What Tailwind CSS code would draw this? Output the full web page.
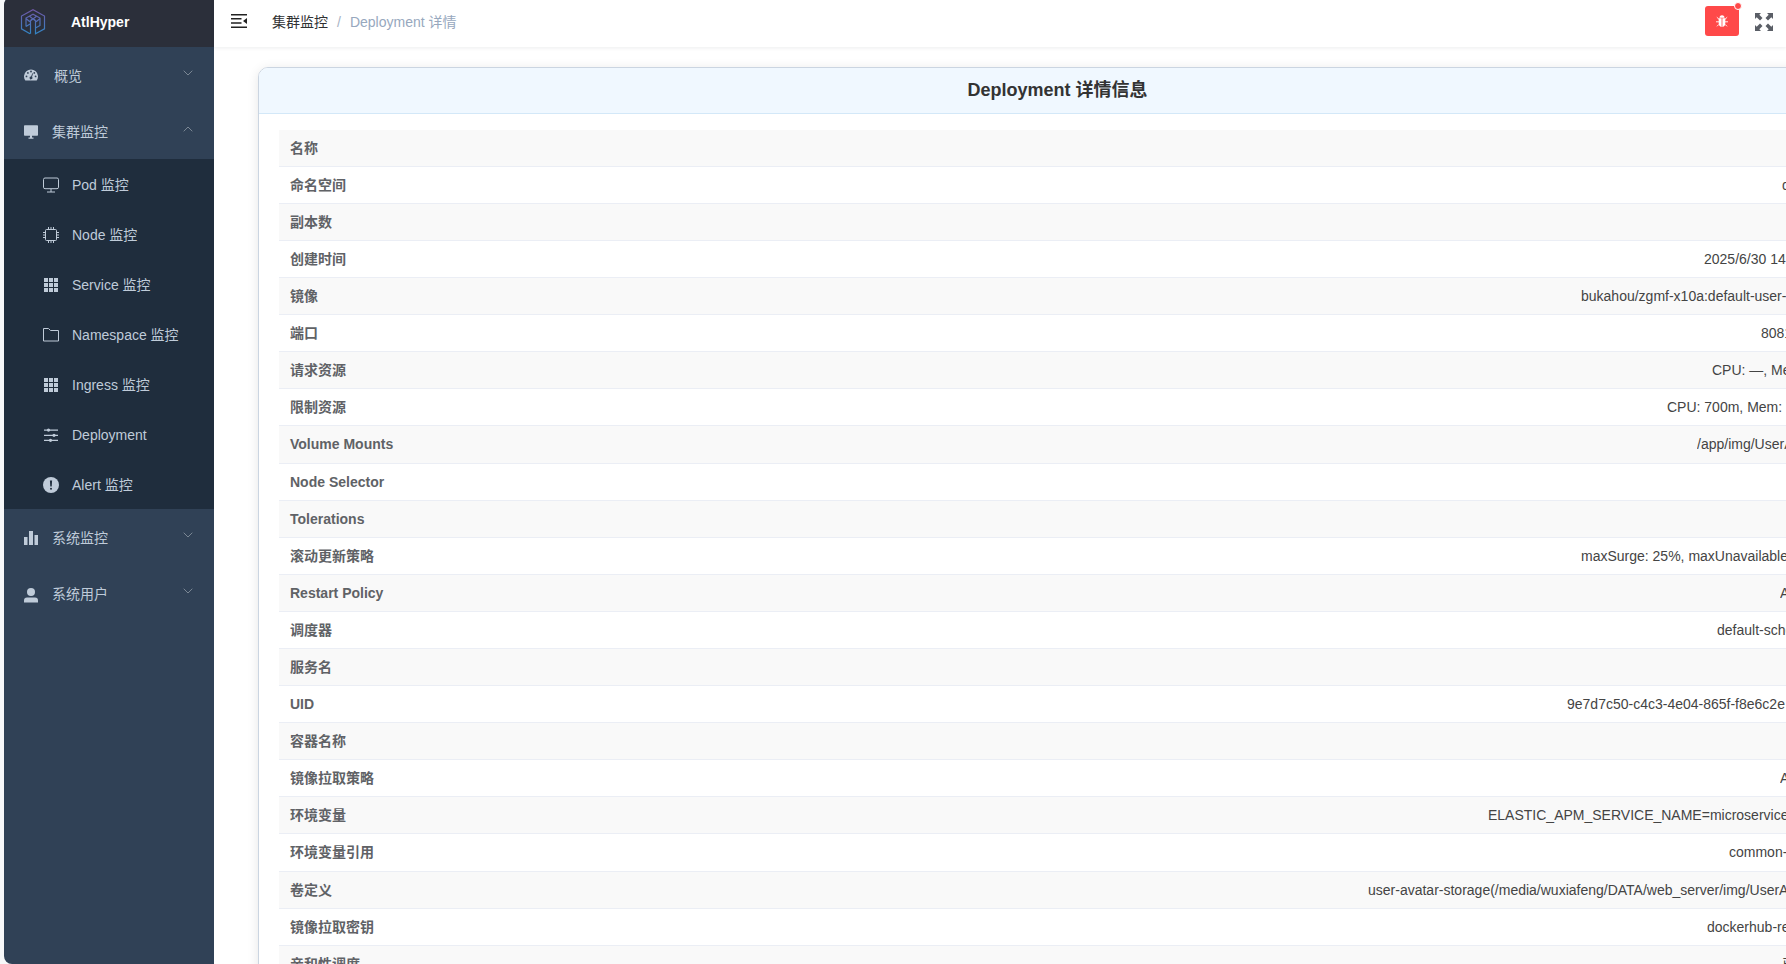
<!DOCTYPE html>
<html lang="zh-CN">
<head>
<meta charset="utf-8">
<title>AtlHyper</title>
<script src="https://cdn.jsdelivr.net/npm/@tailwindcss/browser@4"></script>
</head>
<body class="h-[964px] w-[1786px] overflow-hidden bg-white font-['Liberation_Sans','Noto_Sans_CJK_SC',sans-serif] text-sm text-[#303133]">
<div class="flex h-full bg-[#f7f8f9] pl-1">
  <aside class="-mt-[3px] flex w-[210px] shrink-0 flex-col overflow-hidden rounded-l-lg bg-[#304156] text-[#bfcbd9]">
    <div class="flex h-[50px] shrink-0 items-center bg-[#2b2f3a] pl-4">
      <svg class="size-[26px]" viewBox="0 0 26 26" fill="none" stroke="url(#g)" stroke-width="1.2">
        <defs><linearGradient id="g" x1="0" y1="0" x2="0" y2="26" gradientUnits="userSpaceOnUse"><stop stop-color="#7257a8"/><stop offset="1" stop-color="#2f86c4"/></linearGradient></defs>
        <path d="M10 24.800 1.500 19.800V7L13 .8 24.500 7v12.800L15.500 24.800V12Q15 10 13 10T10.500 12V24.800M6 17.500V9L13 5.200 20 9v7.500l-4.500 2.500M6 17.500l4-2.500M6 9.500l3.500 3 3.500-2.500 3.500 2.500 3.500-3M9.500 7.300 13 10l3.500-2.700"/>
      </svg>
      <h1 class="ml-[25px] text-sm font-bold text-white">AtlHyper</h1>
    </div>
    <nav>
      <div class="flex h-14 items-center pr-[21px] pl-5">
        <svg class="h-3.5 w-3.5" viewBox="0 0 14 14" fill="currentColor"><path fill-rule="evenodd" d="M1.300 12.500A7 7 0 1 1 12.700 12.500ZM2.500 7.500a.9.900 0 1 0 0 1.800.9.900 0 0 0 0-1.800ZM3.900 4a.9.900 0 1 0 0 1.800.9.900 0 0 0 0-1.800ZM7 2.600a.9.900 0 1 0 0 1.800.9.900 0 0 0 0-1.800ZM10.300 4a.9.900 0 1 0 0 1.800.9.900 0 0 0 0-1.800ZM11.600 7.500a.9.900 0 1 0 0 1.800.9.900 0 0 0 0-1.800ZM8.300 5.300 7.100 8.500a1.400 1.400 0 1 0 .9.400L9 5.500Z"/></svg>
        <span class="ml-4 grow pt-0.5">概览</span>
        <svg class="mb-1 h-[6px] w-[10px]" viewBox="0 0 10 6" fill="none" stroke="#7b8794"><path d="m.7.7 4.300 4.300L9.300.7"/></svg>
      </div>
      <div class="flex h-14 items-center pr-[21px] pl-5">
        <svg class="mt-px h-3.5 w-3.5" viewBox="0 0 14 14" fill="currentColor"><path d="M.8.300h12.400q.8 0 .8.800v8.800q0 .8-.8.800H8v1.700h1.500v1.300h-5v-1.300H6v-1.700H.8q-.8 0-.8-.8V1.100Q0 .300.800.300Z"/></svg>
        <span class="ml-3.5 grow pt-0.5">集群监控</span>
        <svg class="mb-1 h-[6px] w-[10px]" viewBox="0 0 10 6" fill="none" stroke="#7b8794"><path d="m.7 5.300 4.300-4.300 4.300 4.300"/></svg>
      </div>
      <ul class="bg-[#1f2d3d]">
        <li class="flex h-[50px] items-center gap-[13px] pt-[2px] pl-[39px]"><svg class="size-4" viewBox="0 0 16 16" fill="none" stroke="currentColor"><rect x=".5" y="1" width="15" height="10.700" rx="1.500"/><path d="M8 12v3M4 15h8"/></svg>Pod 监控</li>
        <li class="flex h-[50px] items-center gap-[13px] pt-[2px] pl-[39px]"><svg class="size-4" viewBox="0 0 16 16" fill="none" stroke="currentColor"><rect x="2.500" y="2.500" width="11" height="11" rx="1"/><path d="M5.500 0v2.500M8 0v2.500M10.500 0v2.500M5.500 13.500V16M8 13.500V16M10.500 13.500V16M0 5.500h2.500M0 8h2.500M0 10.500h2.500M13.500 5.500H16M13.500 8H16M13.500 10.500H16"/></svg>Node 监控</li>
        <li class="flex h-[50px] items-center gap-[13px] pt-[2px] pl-[39px]"><svg class="size-4" viewBox="0 0 16 16" fill="currentColor"><path d="M1 1h4v4H1zM6 1h4v4H6zM11 1h4v4h-4zM1 6h4v4H1zM6 6h4v4H6zM11 6h4v4h-4zM1 11h4v4H1zM6 11h4v4H6zM11 11h4v4h-4z"/></svg>Service 监控</li>
        <li class="flex h-[50px] items-center gap-[13px] pt-[2px] pl-[39px]"><svg class="size-4" viewBox="0 0 16 16" fill="none" stroke="currentColor"><path d="M.5 1.500h5l2 2h8v10.500H.5Z"/></svg>Namespace 监控</li>
        <li class="flex h-[50px] items-center gap-[13px] pt-[2px] pl-[39px]"><svg class="size-4" viewBox="0 0 16 16" fill="currentColor"><path d="M1 1h4v4H1zM6 1h4v4H6zM11 1h4v4h-4zM1 6h4v4H1zM6 6h4v4H6zM11 6h4v4h-4zM1 11h4v4H1zM6 11h4v4H6zM11 11h4v4h-4z"/></svg>Ingress 监控</li>
        <li class="flex h-[50px] items-center gap-[13px] pt-[2px] pl-[39px]"><svg class="size-4" viewBox="0 0 16 16" fill="currentColor"><path d="M1 2.500h14v1.200H1zM1 7.700h14v1.200H1zM1 12.700h14v1.200H1z"/><circle cx="5.500" cy="3.100" r="1.600"/><circle cx="11" cy="8.300" r="1.600"/><circle cx="7.500" cy="13.300" r="1.600"/></svg>Deployment</li>
        <li class="flex h-[50px] items-center gap-[13px] pt-[2px] pl-[39px]"><svg class="size-4" viewBox="0 0 16 16"><circle cx="8" cy="8" r="8" fill="currentColor"/><path d="M6.900 3.500h2.200L8.700 9.500H7.300Z" fill="#1f2d3d"/><circle cx="8" cy="11.700" r="1" fill="#1f2d3d"/></svg>Alert 监控</li>
      </ul>
      <div class="flex h-14 items-center pr-[21px] pl-5">
        <svg class="mt-px h-3.5 w-3.5" viewBox="0 0 14 14" fill="currentColor"><path d="M0 6h3.500v8H0zM5 0h4v14H5zM10.500 4H14v10h-3.500z"/></svg>
        <span class="ml-3.5 grow pt-0.5">系统监控</span>
        <svg class="mb-1 h-[6px] w-[10px]" viewBox="0 0 10 6" fill="none" stroke="#7b8794"><path d="m.7.7 4.300 4.300L9.300.7"/></svg>
      </div>
      <div class="flex h-14 items-center pr-[21px] pl-5">
        <svg class="mt-1 h-[15px] w-3.5" viewBox="0 0 14 15" fill="currentColor"><circle cx="7" cy="4" r="4"/><path d="M0 14.500v-2q0-3 3-3h8q3 0 3 3v2Z"/></svg>
        <span class="ml-3.5 grow pt-0.5">系统用户</span>
        <svg class="mb-1 h-[6px] w-[10px]" viewBox="0 0 10 6" fill="none" stroke="#7b8794"><path d="m.7.7 4.300 4.300L9.300.7"/></svg>
      </div>
    </nav>
  </aside>

  <div class="flex min-w-0 grow flex-col bg-white">
    <header class="flex h-[47px] shrink-0 items-center pl-[17px] shadow-[0_1px_4px_rgba(0,21,41,0.08)]">
      <svg class="mb-[5px] h-3.5 w-4" viewBox="0 0 16 14" fill="#222"><path d="M0 0h16v1.500H0zM0 4.100h10.500v1.500H0zM0 8.300h10.500v1.500H0zM0 12.400h16v1.500H0zM16 4v6l-4-3z"/></svg>
      <div class="mb-[3px] ml-[25px] flex items-center">
        <span>集群监控</span><span class="mx-[9px] text-[#a8b3c5]">/</span><span class="text-[#97a8be]">Deployment 详情</span>
      </div>
      <div class="relative mr-4 mb-[5px] ml-auto flex h-[30px] w-[34px] items-center justify-center rounded-[3px] bg-[#ff4949]">
        <svg class="h-3 w-3" viewBox="0 0 12 12" fill="#fff"><path d="M3.500 2.700a2.500 2.500 0 0 1 5 0ZM2.700 3.300h2.900V12Q2.700 11.500 2.700 8ZM6.400 3.300h2.900V8q0 3.500-2.900 4Z"/><path d="M.8 2.200 3 4.300M11.200 2.200 9 4.300M0 6.800h3M9 6.800h3M1 11.300l2-2M11 11.300l-2-2" stroke="#fff" stroke-width=".9"/></svg>
        <span class="absolute -top-1 -right-[3px] size-2 rounded-full border border-white bg-[#ff4949]"></span>
      </div>
      <svg class="mr-[13px] mb-[3px] size-[18px]" viewBox="0 0 18 18" fill="#5a5e66"><path d="M0 0h6L4.300 1.700 7.500 5 5 7.500 1.700 4.300 0 6z"/><path d="M18 0v6l-1.700-1.700L13 7.500 10.500 5l3.200-3.300L12 0zM0 18v-6l1.700 1.700L5 10.500 7.500 13l-3.200 3.300L6 18zM18 18h-6l1.700-1.700L10.500 13l2.500-2.500 3.300 3.200L18 12z"/></svg>
    </header>

    <main class="min-h-0 grow overflow-hidden pt-5 pl-11">
      <section class="h-[1100px] w-[1599px] overflow-hidden rounded-[10px] border border-[#cbd5e1] shadow-[0_2px_12px_rgba(0,0,0,0.1)]">
        <h2 class="flex h-[46px] items-center justify-center border-b border-[#d3e8f8] bg-[#f0f8ff] pb-px text-lg font-bold text-[#333]">Deployment 详情信息</h2>
        <div id="rows" class="px-5 pt-4"></div>
      </section>
    </main>
  </div>
</div>
<script>
// [label, value, visible width of the value column]
const rows = [
  ['名称', '', 0], ['命名空间', 'default', 4], ['副本数', '', 0], ['创建时间', '2025/6/30 14:06:06', 82],
  ['镜像', 'bukahou/zgmf-x10a:default-user-v1', 205], ['端口', '8081/TCP', 25], ['请求资源', 'CPU: —, Mem: —', 74],
  ['限制资源', 'CPU: 700m, Mem: 1Gi', 119], ['Volume Mounts', '/app/img/UserAvatar', 89], ['Node Selector', '', 0],
  ['Tolerations', '', 0], ['滚动更新策略', 'maxSurge: 25%, maxUnavailable: 25%', 205], ['Restart Policy', 'Always', 6],
  ['调度器', 'default-scheduler', 69], ['服务名', '', 0], ['UID', '9e7d7c50-c4c3-4e04-865f-f8e6c2e', 219],
  ['容器名称', '', 0], ['镜像拉取策略', 'Always', 6], ['环境变量', 'ELASTIC_APM_SERVICE_NAME=microservice', 298],
  ['环境变量引用', 'common-config', 57], ['卷定义', 'user-avatar-storage(/media/wuxiafeng/DATA/web_server/img/UserAvatar)', 418],
  ['镜像拉取密钥', 'dockerhub-regcred', 79], ['亲和性调度', '已配置', 4]
];
document.getElementById('rows').innerHTML = rows.map(([k, v, w], i) => `
  <div class="flex items-start justify-between border-b border-[#ebeef5] pt-2 pr-[50px] pl-[11px] ${i % 2 ? 'bg-white' : 'bg-[#f9f9f9]'} ${i === 8 || i === 19 ? 'h-[38px]' : 'h-[37px]'}">
    <span class="font-bold text-[#606266]">${k}</span>
    <span class="overflow-hidden whitespace-nowrap text-[#444]" style="width:${w}px">${v}</span>
  </div>`).join('');
</script>
</body>
</html>
